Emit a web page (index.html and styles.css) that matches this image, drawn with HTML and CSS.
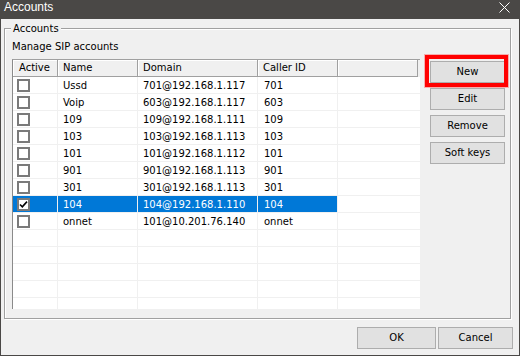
FILE: index.html
```html
<!DOCTYPE html>
<html>
<head>
<meta charset="utf-8">
<link rel="stylesheet" href="styles.css">
</head>
<body>
<div class="window">
  <div class="titlebar">
    <span class="title">Accounts</span>
    <svg class="close" width="11" height="11" viewBox="0 0 11 11"><path d="M0.5 0.5 L10.5 10.5 M10.5 0.5 L0.5 10.5" stroke="#fff" stroke-width="1" fill="none"/></svg>
  </div>
  <div class="client">
    <div class="group">
      <span class="legend">Accounts</span>
      <div class="group-body">
        <div class="left">
          <div class="caption">Manage SIP accounts</div>
          <div class="list">
            <div class="hdr">
              <div class="hc c1">Active</div>
              <div class="hc c2">Name</div>
              <div class="hc c3">Domain</div>
              <div class="hc c4">Caller ID</div>
              <div class="hc c5"></div>
            </div>
            <div class="row"><div class="cell c1"><span class="cb"></span></div><div class="cell c2">Ussd</div><div class="cell c3">701@192.168.1.117</div><div class="cell c4">701</div><div class="cell c5"></div></div>
            <div class="row"><div class="cell c1"><span class="cb"></span></div><div class="cell c2">Voip</div><div class="cell c3">603@192.168.1.117</div><div class="cell c4">603</div><div class="cell c5"></div></div>
            <div class="row"><div class="cell c1"><span class="cb"></span></div><div class="cell c2">109</div><div class="cell c3">109@192.168.1.111</div><div class="cell c4">109</div><div class="cell c5"></div></div>
            <div class="row"><div class="cell c1"><span class="cb"></span></div><div class="cell c2">103</div><div class="cell c3">103@192.168.1.113</div><div class="cell c4">103</div><div class="cell c5"></div></div>
            <div class="row"><div class="cell c1"><span class="cb"></span></div><div class="cell c2">101</div><div class="cell c3">101@192.168.1.112</div><div class="cell c4">101</div><div class="cell c5"></div></div>
            <div class="row"><div class="cell c1"><span class="cb"></span></div><div class="cell c2">901</div><div class="cell c3">901@192.168.1.113</div><div class="cell c4">901</div><div class="cell c5"></div></div>
            <div class="row"><div class="cell c1"><span class="cb"></span></div><div class="cell c2">301</div><div class="cell c3">301@192.168.1.113</div><div class="cell c4">301</div><div class="cell c5"></div></div>
            <div class="row selected"><div class="cell c1"><span class="cb checked"><svg width="9" height="9" viewBox="0 0 9 9"><path d="M1 4.5 L3.3 6.8 L8 1.6" stroke="#000" stroke-width="1.6" fill="none"/></svg></span></div><div class="cell c2">104</div><div class="cell c3">104@192.168.1.110</div><div class="cell c4">104</div><div class="cell c5"></div></div>
            <div class="row"><div class="cell c1"><span class="cb"></span></div><div class="cell c2">onnet</div><div class="cell c3">101@10.201.76.140</div><div class="cell c4">onnet</div><div class="cell c5"></div></div>
            <div class="row"><div class="cell c1"></div><div class="cell c2"></div><div class="cell c3"></div><div class="cell c4"></div><div class="cell c5"></div></div>
            <div class="row"><div class="cell c1"></div><div class="cell c2"></div><div class="cell c3"></div><div class="cell c4"></div><div class="cell c5"></div></div>
            <div class="row"><div class="cell c1"></div><div class="cell c2"></div><div class="cell c3"></div><div class="cell c4"></div><div class="cell c5"></div></div>
            <div class="row"><div class="cell c1"></div><div class="cell c2"></div><div class="cell c3"></div><div class="cell c4"></div><div class="cell c5"></div></div>
            <div class="row"><div class="cell c1"></div><div class="cell c2"></div><div class="cell c3"></div><div class="cell c4"></div><div class="cell c5"></div></div>
          </div>
        </div>
        <div class="side">
          <div class="focus-wrap">
            <button class="btn">New</button>
            <span class="focus-ring"></span>
          </div>
          <button class="btn">Edit</button>
          <button class="btn">Remove</button>
          <button class="btn">Soft keys</button>
        </div>
      </div>
    </div>
    <div class="footer">
      <button class="btn ok">OK</button>
      <button class="btn cancel">Cancel</button>
    </div>
  </div>
</div>
</body>
</html>
```

FILE: styles.css
```css
html, body {
  margin: 0;
  padding: 0;
}

body {
  width: 520px;
  height: 356px;
  overflow: hidden;
  background: #f0f0f0;
  font-family: "DejaVu Sans", sans-serif;
  font-size: 10px;
  color: #000;
}

.window {
  box-sizing: border-box;
  width: 520px;
  height: 356px;
  border: 1px solid #4a4846;
  border-top: 0;
  display: flex;
  flex-direction: column;
}

.titlebar {
  height: 19px;
  flex: none;
  background: #4a4846;
  color: #fff;
  display: flex;
  align-items: flex-start;
  justify-content: space-between;
  padding: 0 9px 0 3px;
}

.title {
  font-family: "Liberation Sans", sans-serif;
  font-size: 12px;
  line-height: 14px;
}

.close {
  margin-top: 2px;
}

.client {
  flex: 1;
  display: flex;
  flex-direction: column;
  padding: 9px 6px 0 3px;
}

.group {
  position: relative;
  box-sizing: border-box;
  width: 507px;
  height: 291px;
  border: 1px solid #a0a0a0;
  box-shadow: 1px 1px 0 #fff, inset 1px 1px 0 #fff;
  padding: 11px 5px 0 7px;
}

.legend {
  position: absolute;
  top: -7px;
  left: 6px;
  padding: 0 2px;
  line-height: 13px;
  background: #f0f0f0;
}

.group-body {
  display: flex;
}

.left {
  width: 408px;
}

.caption {
  line-height: 13px;
}

.list {
  box-sizing: border-box;
  margin-top: 6px;
  width: 408px;
  height: 250px;
  overflow: hidden;
  background: #fff;
  border-top: 1px solid #a0a0a0;
  border-left: 1px solid #8a8a8a;
}

.hdr {
  display: flex;
  height: 17px;
  background: #f0f0f0;
}

.hc {
  box-sizing: border-box;
  height: 17px;
  line-height: 16px;
  padding-left: 5px;
  border-right: 1px solid #a0a0a0;
  border-bottom: 1px solid #a0a0a0;
  box-shadow: inset 1px 1px 0 #fff;
  white-space: nowrap;
}

.hc.c1 {
  padding-left: 6px;
}

.hc.c5 {
  width: 80px;
}

.c1 { width: 45px; }
.c2 { width: 80px; }
.c3 { width: 120px; }
.c4 { width: 80px; }
.c5 { width: 82px; }

.row {
  display: flex;
  height: 17px;
  box-sizing: border-box;
  border-bottom: 1px solid #f0f0f0;
}

.cell {
  box-sizing: border-box;
  height: 16px;
  padding: 1px 0 0 5px;
  line-height: 16px;
  border-right: 1px solid #f0f0f0;
  white-space: nowrap;
  overflow: hidden;
}

.cell.c1 {
  padding: 2px 0 0 4px;
}

.cell.c4 {
  padding-left: 6px;
}

.cell.c5 {
  border-right: 0;
}

.row.selected .c1,
.row.selected .c2,
.row.selected .c3,
.row.selected .c4 {
  background: #0078d7;
  color: #fff;
}

.cb {
  display: block;
  box-sizing: border-box;
  width: 13px;
  height: 13px;
  border: 2px solid #7a7a7a;
  background: #fff;
}

.cb svg {
  display: block;
}

.side {
  margin-left: 10px;
  margin-top: 21px;
  display: flex;
  flex-direction: column;
  gap: 5px;
}

.focus-wrap {
  position: relative;
  height: 22px;
}

.focus-ring {
  position: absolute;
  left: -5px;
  top: -6px;
  width: 83px;
  height: 32px;
  box-sizing: border-box;
  border: 4px solid #ff0000;
  box-shadow: 0 0 0 1px rgba(255, 90, 90, 0.45);
}

.btn {
  display: block;
  box-sizing: border-box;
  width: 75px;
  height: 22px;
  margin: 0;
  padding: 0;
  background: #e1e1e1;
  border: 1px solid #adadad;
  font-family: "DejaVu Sans", sans-serif;
  font-size: 10px;
  color: #000;
  line-height: 20px;
  text-align: center;
}

.footer {
  margin-top: 8px;
  display: flex;
  justify-content: flex-end;
  gap: 2px;
}

.btn.ok {
  width: 79px;
}

.btn.cancel {
  width: 75px;
}
```
